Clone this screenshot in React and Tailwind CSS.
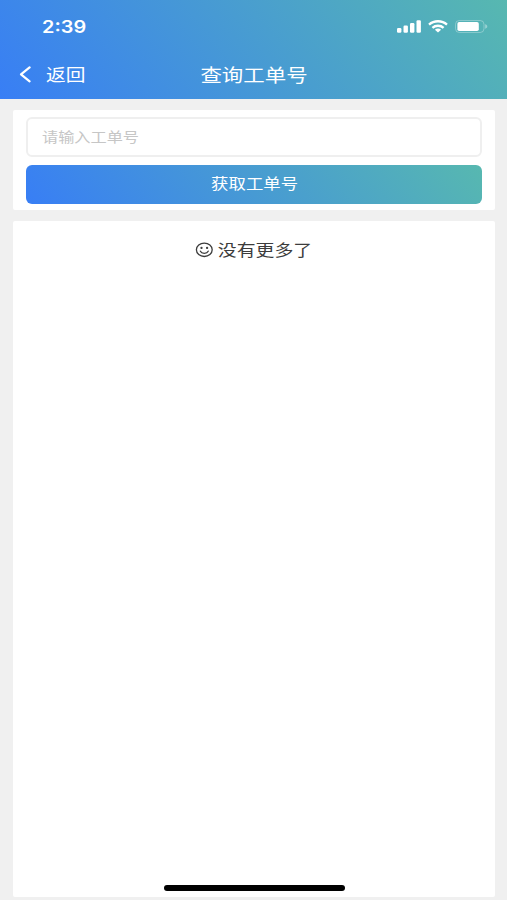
import React, { useState } from 'react';

const StatusIcons = () => (
  <div className="flex items-center">
    <svg width="24" height="13" viewBox="0 0 24 13" fill="white">
      <rect x="0" y="8" width="4.4" height="4.7" rx="1.2" />
      <rect x="6.5" y="5.6" width="4.4" height="7.1" rx="1.2" />
      <rect x="13" y="3" width="4.4" height="9.7" rx="1.2" />
      <rect x="19.5" y="0.3" width="4.4" height="12.4" rx="1.2" />
    </svg>
    <svg className="ml-[7px]" width="20" height="13" viewBox="0 0 20 13" fill="none" stroke="white" strokeWidth="2.3">
      <path d="M1 4.6C6 .1 14 .1 19 4.6" />
      <path d="M4.4 7.9C7.5 5 12.5 5 15.6 7.9" />
      <path d="M6.9 9.7C8.7 8.2 11.3 8.2 13.1 9.7L10 12.6Z" fill="white" stroke="none" />
    </svg>
    <svg className="ml-[7px]" width="33" height="13" viewBox="0 0 33 13">
      <rect x="0.5" y="0.5" width="28.5" height="12" rx="3.8" fill="none" stroke="white" strokeOpacity="0.3" />
      <rect x="2.4" y="2" width="21.4" height="9" rx="1.8" fill="white" />
      <path d="M30.2 4.3C33 5 33 8 30.2 8.7Z" fill="white" fillOpacity="0.4" />
    </svg>
  </div>
);

const Header = () => (
  <header className="h-[99px] shrink-0 bg-[linear-gradient(50deg,#387ef5,#57b8b0)] text-white">
    <div className="h-[50px] pt-[2px] pl-[42px] pr-[19px] flex items-center justify-between">
      <span className="pt-[3px] font-['Inter'] text-[17px] font-semibold origin-left scale-x-[1.17]">2:39</span>
      <StatusIcons />
    </div>
    <div className="h-[49px] px-[19px] grid grid-cols-[1fr_auto_1fr] items-center">
      <button className="flex items-center gap-[14px] text-left">
        <svg width="13" height="17" viewBox="0 0 13 17" fill="none" stroke="white" strokeWidth="2.2" strokeLinecap="round" strokeLinejoin="round">
          <path d="M10.6 1.4 2 8.3 10.6 15.4" />
        </svg>
        <span className="pt-[2px] text-[17px] leading-6 origin-left scale-x-[1.16]">返回</span>
      </button>
      <h1 className="pt-[2px] text-[18px] leading-6 scale-x-[1.19]">查询工单号</h1>
    </div>
  </header>
);

const App = () => {
  const [orderNo, setOrderNo] = useState('');

  return (
    <div className="relative h-[900px] w-full overflow-hidden flex flex-col bg-[#f0f0f0] font-['Liberation_Sans','Noto_Sans_CJK_SC',sans-serif]">
      <Header />

      <main className="flex-1 flex flex-col gap-[11px] pt-[11px] pb-[3px] pl-[13px] pr-[12px]">
        {/* Search form */}
        <section className="h-[100px] bg-white rounded-xs pt-[7px] pl-[13px] pr-[13px] flex flex-col gap-2">
          <div className="h-[40px] border-2 border-[#efefef] rounded-md px-[14px] pb-px flex items-center overflow-hidden">
            <input
              value={orderNo}
              onChange={(e) => setOrderNo(e.target.value)}
              placeholder="请输入工单号"
              className="w-[340px] text-[14px] leading-5 outline-none origin-left scale-x-[1.155] text-[#333] placeholder:text-[#c6c6c6]"
            />
          </div>
          <button className="h-[39px] rounded-md bg-[linear-gradient(50deg,#387ef5,#57b8b0)] text-white text-[15px] flex items-center justify-center">
            <span className="pl-px scale-x-[1.16]">获取工单号</span>
          </button>
        </section>

        {/* Result list */}
        <section className="flex-1 bg-white rounded-xs pt-[16px]">
          <div className="flex justify-center items-center text-[#3c3c3c]">
            <svg className="mr-[12px]" width="18" height="16" viewBox="0 0 18 16" fill="none" stroke="currentColor" strokeWidth="1.3" strokeLinecap="round">
              <ellipse cx="9.3" cy="7.8" rx="7.9" ry="6.7" />
              <path d="M5.4 9.2C6.6 12 12 12 13.2 9.2" />
              <ellipse cx="6.5" cy="5.9" rx="0.5" ry="0.5" fill="currentColor" />
              <ellipse cx="12.1" cy="5.9" rx="0.5" ry="0.5" fill="currentColor" />
            </svg>
            <span className="pt-[2px] text-[16px] leading-6 mr-[7px] scale-x-[1.18]">没有更多了</span>
          </div>
        </section>
      </main>

      {/* Home indicator */}
      <div className="absolute bottom-[9px] left-[164px] w-[181px] h-[6px] rounded-full bg-black" />
    </div>
  );
};

export default App;
